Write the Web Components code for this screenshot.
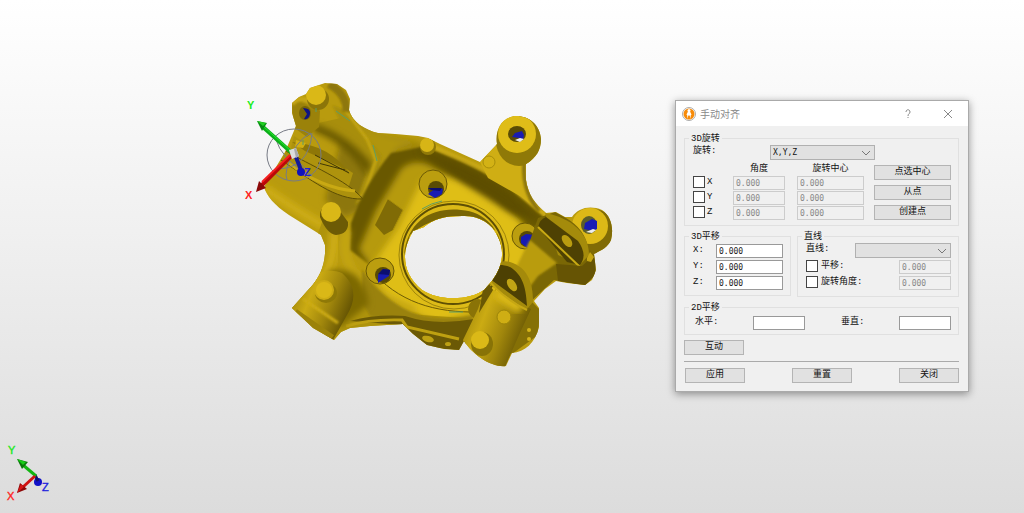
<!DOCTYPE html>
<html lang="zh-CN">
<head>
<meta charset="utf-8">
<title>手动对齐</title>
<style>
html,body{margin:0;height:100%}
body{font:9px/12px "Liberation Mono","Noto Sans CJK SC",monospace;color:#111}
</style>
</head>
<body>
<align-app></align-app>
<script>
const base = `
*{box-sizing:border-box}
input,select,button{font:inherit;margin:0;border-radius:0;min-width:0}
label{white-space:nowrap;line-height:14px}
input[type=text]{display:block;width:100%;height:14px;padding:0 2px;border:1px solid #999;background:#fff;color:#222;font:8px/12px "DejaVu Sans Mono",monospace}
input[type=text]:disabled{border-color:#ccc;background:#f0f0f0;color:#888}
input[type=checkbox]{appearance:none;width:12px;height:12px;border:1px solid #444;background:#fff;flex:none}
`;
function define(name, css, html) {
  const t = document.createElement('template');
  customElements.define(name, class extends HTMLElement {
    connectedCallback() {
      if (this.shadowRoot) return;
      t.innerHTML = `<style>${base}${css}</style>${typeof html === 'function' ? html(this) : html}`;
      this.attachShadow({mode: 'open'}).append(t.content.cloneNode(true));
    }
  });
}

define('push-button', `
:host{display:block}
button{display:block;width:100%;height:15px;padding:0;border:1px solid #b4b4b4;background:#e1e1e1;color:#111;line-height:13px}
`, `<button type="button"><slot></slot></button>`);

define('group-box', `
:host{display:block;min-width:0}
fieldset{margin:0;padding:0 7px 4px 8px;border:1px solid #e0e0e0;min-width:0}
legend{margin-left:-4px;padding:0 2px;height:12px;line-height:14px}
`, el => `<fieldset><legend>${el.getAttribute('label')}</legend><slot></slot></fieldset>`);

define('drop-down', `
:host{display:block}
div{display:grid;grid-template-columns:1fr 14px}
select{grid-area:1/1/2/3;appearance:none;width:100%;height:15px;border:1px solid #b0b0b0;background:#e1e1e1;padding:0 2px;font:8px/13px "DejaVu Sans Mono",monospace;color:#111}
svg{grid-area:1/2;align-self:center;pointer-events:none;fill:none;stroke:#777}
`, el => `<div><select aria-label="${el.getAttribute('name')}"><option>${el.getAttribute('value') || ''}</option></select><svg width="10" height="6"><path d="M1 1l4 4 4-4"/></svg></div>`);

define('number-row', `
:host{display:grid;grid-template-columns:23px 1fr;height:16px}
label{line-height:12px}
`, el => `<label for="v">${el.getAttribute('label')}</label><input id="v" type="text" value="${el.getAttribute('value') || ''}">`);

define('axis-row', `
:host{display:grid;grid-template-columns:40px 52px 12px 67px;height:15px}
div{display:flex;gap:2px;align-items:center;height:12px}
.center{grid-column:4}
`, el => { const a = el.getAttribute('axis'); return `<div><input id="c" type="checkbox"><label for="c">${a}</label></div>
<input type="text" disabled value="0.000" aria-label="${a} 角度"><input class="center" type="text" disabled value="0.000" aria-label="${a} 旋转中心">`; });

define('check-row', `
:host{display:grid;grid-template-columns:1fr 52px;height:16px}
div{display:flex;gap:3px;align-items:center;height:12px}
`, el => `<div><input id="c" type="checkbox"><label for="c">${el.getAttribute('label')}</label></div><input type="text" disabled value="0.000" aria-label="${el.getAttribute('label')}">`);

define('title-bar', `
:host{display:flex;align-items:center;gap:4px;height:25px;background:#fff;padding:0 10px 0 6px;color:#888;font:10px/14px "Noto Sans CJK SC",sans-serif}
span{flex:1}
button{width:20px;height:20px;padding:0;border:0;background:none;color:#888;margin-left:16px}
button svg{display:block;margin:auto}
`, `<svg width="14" height="14" viewBox="0 0 14 14"><circle cx="7" cy="7" r="6.500" fill="#fff" stroke="#aaa"/><circle cx="7" cy="7" r="5.500" fill="#f78b09"/><path d="M6 4.500h2l1.500 3-.8 1V12l-1-3.500h-1.400l-1 3.500V8.500l-.8-1z" fill="#fff"/><circle cx="7" cy="3.500" r="1.500" fill="#fff"/></svg>
<span>手动对齐</span>
<button type="button" aria-label="帮助"><svg width="8" height="10" fill="none" stroke="#888"><path d="M2 3C2 0 6 0 6 3 6 5 4 4.500 4 7M4 8v1"/></svg></button>
<button type="button" aria-label="关闭"><svg width="10" height="10" stroke="#888"><path d="M1 1l8 8M9 1L1 9"/></svg></button>`);

define('align-dialog', `
:host{display:block;width:294px;border:1px solid #aaa;background:#f0f0f0;box-shadow:0 2px 8px rgba(0,0,0,.4)}
form{padding:6px 9px 8px 8px;display:grid;row-gap:4px}
.mode{display:grid;grid-template-columns:77px 105px;height:16px;padding-top:1px}
.mode label{line-height:12px}
.rotate{display:grid;grid-template-columns:1fr 77px;column-gap:9px}
.heads{display:grid;grid-template-columns:40px 52px 12px 67px;height:16px;line-height:18px;text-align:center}
.heads span:last-child{grid-column:4}
.btns{display:grid;gap:5px;align-content:start;padding-top:5px}
.pair{display:grid;grid-template-columns:107px 1fr;column-gap:6px}
.stack{padding-top:2px;margin-bottom:-1px}
.line{display:grid;grid-template-columns:1fr 96px;height:18px;padding-top:1px}
.line label{line-height:12px}
.plane{display:grid;grid-template-columns:60px 52px 34px 1fr 52px;height:17px;padding-top:3px}
.plane label{line-height:12px;padding-left:2px}
.interact{display:grid;grid-template-columns:60px;padding-top:1px}
hr{margin:2px 0;border:0;border-top:1px solid #aaa;width:100%}
.foot{display:grid;grid-template-columns:60px 60px 60px;justify-content:space-between;padding-left:1px}
`, `<title-bar></title-bar><form>
<group-box label="3D旋转">
 <div class="mode"><label>旋转:</label><drop-down name="旋转" value="X,Y,Z"></drop-down></div>
 <div class="rotate"><div>
  <div class="heads"><span></span><span>角度</span><span>旋转中心</span></div>
  <axis-row axis="X"></axis-row><axis-row axis="Y"></axis-row><axis-row axis="Z"></axis-row>
 </div><div class="btns"><push-button>点选中心</push-button><push-button>从点</push-button><push-button>创建点</push-button></div></div>
</group-box>
<div class="pair">
 <group-box label="3D平移"><div class="stack"><number-row label="X:" value="0.000"></number-row><number-row label="Y:" value="0.000"></number-row><number-row label="Z:" value="0.000"></number-row></div></group-box>
 <group-box label="直线"><div class="line"><label>直线:</label><drop-down name="直线"></drop-down></div><check-row label="平移:"></check-row><check-row label="旋转角度:"></check-row></group-box>
</div>
<group-box label="2D平移"><div class="plane"><label for="h">水平:</label><input id="h" type="text"><span></span><label for="w">垂直:</label><input id="w" type="text"></div></group-box>
<div class="interact"><push-button>互动</push-button></div>
<hr>
<div class="foot"><push-button>应用</push-button><push-button>重置</push-button><push-button>关闭</push-button></div>
</form>`);

define('axis-triad', `:host{display:block}svg{display:block;font:11px "Liberation Sans",sans-serif}`, `
<svg width="60" height="75" viewBox="0 0 60 75">
<circle cx="38" cy="47" r="4" fill="#1111c8"/><path d="M35 40l3 6" stroke="#111170" stroke-width="3"/>
<path d="M36 41L23 30" stroke="#12b512" stroke-width="3"/><path d="M17 24l11 3-6 7z" fill="#087908"/><path d="M17 24l9 3-3 3z" fill="#16cc16"/>
<path d="M35 41L23 52" stroke="#d01212" stroke-width="3"/><path d="M17 58l3-10 7 6z" fill="#8d0808"/><path d="M17 58l4-9 3 3z" fill="#d51717"/>
<text x="8" y="19" fill="#21e821" stroke="#21e821" stroke-width=".4">Y</text><text x="7" y="65" fill="#f22" stroke="#f22" stroke-width=".4">X</text><text x="42" y="56" fill="#22d" stroke="#22d" stroke-width=".4">Z</text>
</svg>`);

define('part-model', `:host{display:block}svg{display:block}`, `
<svg width="640" height="400" viewBox="0 0 640 400" role="img" aria-label="3D">
<defs>
<filter id="s1" x="-30%" y="-30%" width="160%" height="160%"><feGaussianBlur stdDeviation="1"/></filter>
<filter id="s3" x="-30%" y="-30%" width="160%" height="160%"><feGaussianBlur stdDeviation="3"/></filter>
<linearGradient id="cyl" x1="0" y1="0" x2="1" y2=".45"><stop offset="0" stop-color="#8c7508"/><stop offset=".4" stop-color="#cbab13"/><stop offset=".7" stop-color="#a0860c"/><stop offset="1" stop-color="#655403"/></linearGradient>
<clipPath id="body"><path clip-rule="evenodd" d="M310 88L325 83 337 84 346 90 350 99 349 110C352 122 365 130 378 133L395 134 418 136 428 138 440 144 480 162 497 144C495 131 500 119 514 116 528 115 540 124 541 139 541 150 536 158 526 164L526 180C528 194 535 204 546 213L556 212 565 217 572 217C578 208 590 205 602 210 611 216 614 228 611 240 608 247 602 250 594 254L596 270 592 280 585 285 567 283 556 281 545 289 534 301 539 308 539 327C535 343 525 352 512 353L506 366C492 368 473 355 464 341L459 350 444 349 427 345 413 334 403 324 370 326 350 328 341 332 334 340 313 328 292 308 309 289C322 276 326 260 325 245L321 235 289 215C274 205 267 196 264 187L285 152 296 126 292 113 292 103 299 97 306 94ZM405 257C405 248 408 240 413 231L424 227C433 219 445 216 462 216 477 215 492 222 498 237 505 251 503 266 492 281L484 290C470 300 441 302 422 290 410 280 405 269 405 257Z"/></clipPath>
</defs>
<g clip-path="url(#body)">
<path d="M250 70H630V380H250Z" fill="#b99b0e"/>
<path d="M350 108C365 145 400 135 425 146L397 150 374 202 345 218 325 200Z" fill="#8d7707" filter="url(#s3)"/>
<path d="M350 112Q366 136 420 141L397 149 378 186 362 204 374 160Z" fill="#b0950d" filter="url(#s3)"/>
<path d="M332 105L366 174 355 205 374 193 382 155 360 130 347 110" fill="#a88f0c" filter="url(#s1)"/>
<path d="M305 126L347 144 367 164 374 153 350 116Z" fill="#a88e0c"/>
<path d="M312 131Q345 142 366 176L372 164Q350 136 316 124Z" fill="#6b5a05" filter="url(#s3)"/>
<path d="M341 104L367 139 376 160 366 189Q362 202 354 194" fill="none" stroke="#c5a613" stroke-width="3" filter="url(#s1)"/>
<path d="M294 136L353 173 348 189 288 160Z" fill="#ae930d"/>
<path d="M292 142Q330 145 350 174L339 166 305 151Z" fill="#8e7707"/>
<path d="M296 140l10 3-3 5-8-1" fill="#d1af12"/>
<path d="M315 155L349 173M318 163L345 170" stroke="#403705"/>
<path d="M281 160C310 179 335 200 363 199C347 180 309 165 286 151" fill="#ac910d" stroke="#5d4e05" stroke-width="1"/>
<path d="M289 163Q320 188 355 191" fill="none" stroke="#c9a913" stroke-width="3"/>
<path d="M264 188Q297 211 324 226" fill="none" stroke="#cfae14" stroke-width="8" filter="url(#s3)"/>
<path d="M351 223Q365 184 391 153L425 146 458 159 507 186 548 216 523 238 492 218Q458 196 423 204C394 212 377 245 370 265L350 250Z" fill="#695805" filter="url(#s1)"/>
<path d="M376 210L401 169Q412 159 427 164L491 195 524 224 507 236 472 210Q433 200 410 225L397 257 373 270 359 249Z" fill="#b69a0d" filter="url(#s3)"/>
<path d="M398 228L422 180Q449 169 494 200L532 234 518 277 484 309 436 323 388 299 369 270Z" fill="#dfbe19" filter="url(#s3)"/>
<path d="M388 199L403 210 393 230 384 235 375 225Z" fill="#806b06"/><path d="M388 199L403 210 393 230" fill="none" stroke="#a88e0b"/>
<path d="M424 143L483 169 507 183 550 219" fill="none" stroke="#cdac14" stroke-width="5" filter="url(#s1)"/>
<path d="M416 150Q460 157 510 192L542 222 508 211 465 184Z" fill="#5d4e04" filter="url(#s3)"/>
<ellipse cx="454" cy="256" rx="56" ry="55" fill="#ddbb18"/><ellipse cx="454" cy="255" rx="55" ry="54" fill="none" stroke="#9d850b"/><ellipse cx="453" cy="254" rx="51" ry="50" fill="#dbb917" stroke="#5e4f04" stroke-width="2"/>
<path d="M404 256C407 220 433 207 461 210 485 211 501 231 502 251L496 231Q480 216 456 216 428 219 410 235Z" fill="#786505"/>
<path d="M326 211Q340 242 335 263 324 286 308 294L330 307 367 293 407 314 479 319 470 337 405 326 332 341 291 309" fill="#ae930c"/>
<path d="M334 231Q335 260 324 275" fill="none" stroke="#cfae15" stroke-width="10" filter="url(#s3)"/>
<path d="M347 230Q340 256 357 277 382 299 415 310" fill="none" stroke="#c6a713" stroke-width="7" filter="url(#s3)"/>
<path d="M362 269Q376 292 403 308T474 315L467 333 403 324 370 316 362 302Z" fill="#9a820a" filter="url(#s1)"/>
<path d="M370 269C398 302 434 313 480 312" fill="none" stroke="#6d5b05"/>
<path d="M350 321Q376 314 405 316 435 326 474 319L463 351 428 347 402 325Z" fill="#6b5905"/>
<path d="M346 326Q370 319 402 320L407 327 459 339" fill="none" stroke="#bea011" stroke-width="3"/>
<path d="M329 271Q363 264 369 304L342 326 321 325Z" fill="#7d6906" filter="url(#s3)"/>
<path d="M303 283C313 272 330 268 342 273 355 284 357 299 347 315L333 340 291 310Z" fill="url(#cyl)"/>
<path d="M303 299L338 323" stroke="#cdac14" stroke-width="3" filter="url(#s1)"/><path d="M295 312L332 338" stroke="#9b820a" stroke-width="7"/>
<path d="M480 162L499 142 535 158 528 200 548 217 520 196 488 178Z" fill="#cfae14"/><path d="M525 155Q520 189 539 211" fill="none" stroke="#8a7408" stroke-width="4" filter="url(#s1)"/>
<ellipse cx="519" cy="141" rx="23" ry="25" fill="#8f7908"/><circle cx="517" cy="134" r="19" fill="#dfbd18"/><ellipse cx="517" cy="134" rx="9" ry="8" fill="#5a4c05"/><path d="M512 137l3-4 7-2 2 4-1 5-4-2z" fill="#1a1cb0"/><path d="M515 140l5-2 4 1-4 3z" fill="#eee"/>
<circle cx="489" cy="162" r="6" fill="#d3b215" stroke="#a88e0b"/>
<ellipse cx="594" cy="232" rx="21" ry="23" fill="#806b06"/><circle cx="590" cy="226" r="18" fill="#dcb917"/><ellipse cx="589" cy="225" rx="8" ry="9" fill="#5b5e2a"/><path d="M584 229l1-6 7-4 5 2v8l-4 2z" fill="#191cb4"/><path d="M586 232l7-3 3 1-4 3z" fill="#eee"/>
<g fill="#bb9e0f" stroke="#6b5905"><ellipse cx="433" cy="184" rx="14" ry="14"/><ellipse cx="380" cy="271" rx="14" ry="13"/><ellipse cx="525" cy="236" rx="13" ry="13"/></g>
<g fill="#594b04"><circle cx="436" cy="189" r="8"/><circle cx="383" cy="275" r="8"/><circle cx="527" cy="239" r="8"/></g>
<path d="M428 194l8-6 7 1-1 5-7 4zM378 275l5-6 7 1-1 6-11 7zM521 237l5-3 9 1v11l-8 2-6-5z" fill="#181cb2"/>
<path d="M428 188h14l-2 3-9-1zM378 274l5-5 7 1-1 5z" fill="#0c0e70"/>
<path d="M538 218L555 212 566 218Q585 229 588 248L594 256 596 274 585 286 554 280 528 304 520 280 528 246Z" fill="#7a6705"/>
<path d="M530 240L557 263 538 276 520 300 511 278Z" fill="#b99c10" filter="url(#s1)"/>
<path d="M545 213C563 216 589 228 589 255L580 265 558 255Z" fill="#a48b0b"/><path d="M538 227Q540 219 546 217L578 241Q588 255 580 265L567 262Z" fill="#4e4103"/><path d="M538 227L580 267" stroke="#c9aa14" stroke-width="2"/><ellipse cx="567" cy="241" rx="4" ry="7" transform="rotate(-38 567 241)" fill="#b99c10"/>
<path d="M556 264L582 266 597 252 595 275 585 285 558 281Z" fill="#665404"/><path d="M587 258l3-6 4 5-3 5-4-1z" fill="#c5a613"/>
<circle cx="478" cy="309" r="10" fill="#8a7307"/>
<path d="M532 302L540 310 538 335 512 354 503 344Z" fill="#857006"/><g fill="#d4b319"><circle cx="529" cy="330" r="2"/><circle cx="529" cy="339" r="2"/></g>
<path d="M486 286L531 309 519 335 505 367C486 366 466 352 463 340L478 309Z" fill="url(#cyl)"/>
<path d="M496 293L521 309" stroke="#dcba18" stroke-width="10" filter="url(#s3)"/>
<path d="M485 276C487 265 500 259 510 262 526 267 533 280 533 302L526 310 486 282Z" fill="#a48a0b"/><path d="M485 276C488 265 498 263 510 267 521 274 526 284 527 306L486 276Z" fill="#4d4003"/><path d="M486 277Q502 298 527 310" fill="none" stroke="#c6a714" stroke-width="2"/><path d="M485 277L493 290 479 313Z" fill="#695704"/><ellipse cx="512" cy="285" rx="4" ry="7" transform="rotate(-35 512 285)" fill="#c1a415"/>
<circle cx="504" cy="317" r="7" fill="#cfae14" stroke="#9c840a"/>
<ellipse cx="482" cy="344" rx="11" ry="12" fill="#887307"/><circle cx="480" cy="340" r="9" fill="#dbb917"/>
<ellipse cx="428" cy="339" rx="6" ry="3" transform="rotate(15 428 339)" fill="#bda013"/><ellipse cx="448" cy="344" rx="3" ry="2" fill="#bda013"/>
<path d="M292 103Q310 94 320 111L319 127 307 137 293 127Z" fill="#9b820a"/><path d="M292 104Q300 93 315 107" stroke="#c5a613" stroke-width="5" fill="none" filter="url(#s1)"/>
<path d="M329 84Q348 95 346 112" fill="none" stroke="#8e7708" stroke-width="8" filter="url(#s1)"/>
<ellipse cx="318" cy="99" rx="11" ry="11" fill="#8c7509"/><circle cx="316" cy="95" r="10" fill="#dab817"/>
<ellipse cx="305" cy="113" rx="6" ry="7" fill="#776406"/><path d="M303 108q8 0 7 6t-6 5l3-5z" fill="#101383"/>
<path d="M320 217Q319 205 334 203L348 222Q349 234 336 235 327 234 320 217Z" fill="#6d5b05"/><circle cx="331" cy="212" r="10" fill="#dab817"/>
<ellipse cx="326" cy="293" rx="11" ry="10" fill="#8f7907"/><circle cx="324" cy="290" r="10" fill="#cdac14"/><circle cx="324" cy="290" r="8" fill="#dab817"/>
<circle cx="428" cy="147" r="8" fill="#917a08"/><circle cx="427" cy="145" r="7" fill="#d7b516"/>
<path d="M336 111l14 10M316 108v4M373 145l4 16M422 209q9-6 20-8M449 312h14M303 140v5" fill="none" stroke="#5d9e65"/>
</g>
<g fill="none" stroke="#777b85"><ellipse cx="294" cy="155" rx="27" ry="26"/><path d="M274 135Q283 164 312 176M311 133Q294 141 287 168 285 176 287 180M276 169Q309 169 312 133M274 135l38 41"/></g>
<path d="M294 152l7 18" stroke="#151a96" stroke-width="4"/><circle cx="301" cy="172" r="4" fill="#1013bd"/>
<path d="M292 153L263 127" stroke="#0baf19" stroke-width="4"/><path d="M291 151L264 127" stroke="#25e72b"/><path d="M257 121l10 2-5 8z" fill="#078e12"/><path d="M257 121l9 2-3 3z" fill="#20ce20"/>
<path d="M291 156L262 185" stroke="#ba0909" stroke-width="4"/><path d="M290 155L262 182" stroke="#f42020" stroke-width="2"/><path d="M256 192l3-11 7 7z" fill="#8b0909"/>
<path d="M289 150l7-2 3 8-7 3z" fill="#ddd"/><path d="M296 148l3 8-3 2-2-9z" fill="#aaa"/>
<g font-family="Liberation Sans,sans-serif" font-size="11" font-weight="bold"><text x="247" y="109" fill="#20ed20">Y</text><text x="245" y="199" fill="#f22">X</text><text x="304" y="176" fill="#2020d8">Z</text></g>
</svg>`);

define('align-app', `
:host{display:block;position:relative;min-height:100%;overflow:hidden;background:linear-gradient(#fff,#f0f0f0 45%,#dcdcdc)}
part-model{position:absolute;left:0;top:0}
axis-triad{position:absolute;left:0;bottom:3px}
align-dialog{position:absolute;right:55px;top:100px}
`, `<part-model></part-model><axis-triad></axis-triad><align-dialog></align-dialog>`);
</script>
</body>
</html>
